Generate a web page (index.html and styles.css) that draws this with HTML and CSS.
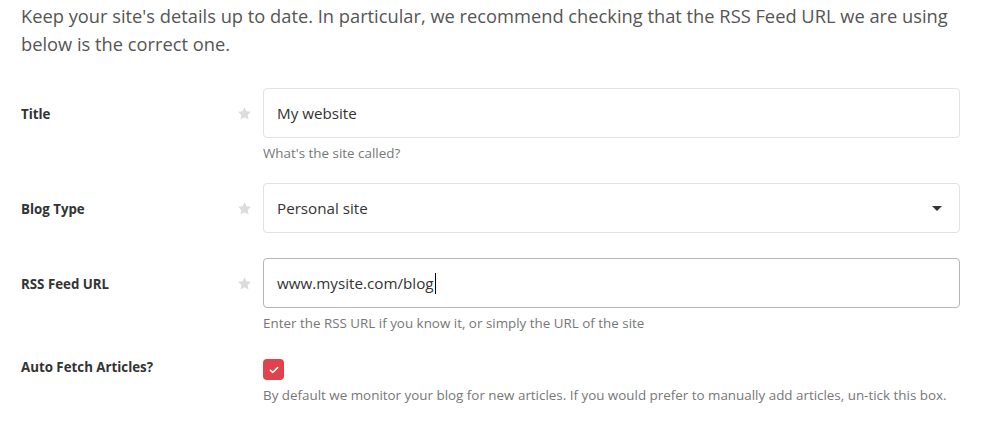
FILE: index.html
```html
<!DOCTYPE html>
<html>
<head>
<meta charset="utf-8">
<link rel="stylesheet" href="styles.css">
</head>
<body>
<div class="page">
  <p class="intro">Keep your site's details up to date. In particular, we recommend checking that the RSS Feed URL we are using below is the correct one.</p>

  <div class="row">
    <div class="label">Title</div>
    <div class="star"><svg viewBox="0 0 24 24" width="15" height="15"><path d="M12 1.8l3.1 6.6 7.2.9-5.3 5 1.4 7.1L12 17.9l-6.4 3.5L7 14.3l-5.3-5 7.2-.9z" fill="#dcdcdc"/></svg></div>
    <div class="control"><div class="input">My website</div></div>
    <div class="help">What's the site called?</div>
  </div>

  <div class="row">
    <div class="label">Blog Type</div>
    <div class="star"><svg viewBox="0 0 24 24" width="15" height="15"><path d="M12 1.8l3.1 6.6 7.2.9-5.3 5 1.4 7.1L12 17.9l-6.4 3.5L7 14.3l-5.3-5 7.2-.9z" fill="#dcdcdc"/></svg></div>
    <div class="control"><div class="input select"><span>Personal site</span><span class="caret"></span></div></div>
  </div>

  <div class="row">
    <div class="label">RSS Feed URL</div>
    <div class="star"><svg viewBox="0 0 24 24" width="15" height="15"><path d="M12 1.8l3.1 6.6 7.2.9-5.3 5 1.4 7.1L12 17.9l-6.4 3.5L7 14.3l-5.3-5 7.2-.9z" fill="#dcdcdc"/></svg></div>
    <div class="control"><div class="input focus">www.mysite.com/blog<span class="cursor"></span></div></div>
    <div class="help">Enter the RSS URL if you know it, or simply the URL of the site</div>
  </div>

  <div class="row check-row">
    <div class="label">Auto Fetch Articles?</div>
    <div class="star"></div>
    <div class="control"><span class="checkbox"><svg viewBox="0 0 20 20" width="12" height="12"><path d="M4 10.5l3.8 3.6L16 6" fill="none" stroke="#fff" stroke-width="2.6" stroke-linecap="round" stroke-linejoin="round"/></svg></span></div>
    <div class="help">By default we monitor your blog for new articles. If you would prefer to manually add articles, un-tick this box.</div>
  </div>
</div>
</body>
</html>
```

FILE: styles.css
```css
* { box-sizing: border-box; }
html, body { margin: 0; padding: 0; background: #fff; }
body { font-family: "Open Sans", "Liberation Sans", sans-serif; color: #333; }
.page { padding: 2px 0 0 21px; width: 986px; }
.intro {
  margin: 0 0 30px;
  width: 950px;
  font-size: 18.3px;
  line-height: 28px;
  color: #555;
}
.row {
  display: grid;
  grid-template-columns: 204px 22px 697px;
  column-gap: 8px;
  margin-bottom: 25px;
}
.label {
  grid-column: 1; grid-row: 1;
  align-self: center;
  font-size: 13.3px;
  font-weight: 700;
  color: #333;
  padding-top: 1px;
}
.star {
  grid-column: 2; grid-row: 1;
  align-self: center;
  display: flex; justify-content: center; align-items: center;
  height: 16px;
}
.control { grid-column: 3; grid-row: 1; }
.help {
  grid-column: 3; grid-row: 2;
  margin: 5px 0 -5px;
  font-size: 13.4px;
  line-height: 20px;
  color: #777;
}
.input {
  height: 50px;
  border: 1px solid #e2e2e2;
  border-radius: 4px;
  padding: 0 13px;
  display: flex; align-items: center;
  font-size: 15.2px;
  color: #333;
}
.input.focus { border-color: #b5b5b5; }
.select { justify-content: space-between; padding-right: 17px; }
.caret {
  width: 0; height: 0;
  border-left: 5px solid transparent;
  border-right: 5px solid transparent;
  border-top: 5px solid #333;
  margin-top: 1px;
}
.cursor {
  display: inline-block;
  width: 1px; height: 21px;
  background: #000;
  margin-left: 1px;
}
.check-row .control { padding-top: 6px; }
.checkbox {
  width: 21px; height: 21px;
  border-radius: 4px;
  background: #e0434b;
  display: flex; align-items: center; justify-content: center;
}
```
